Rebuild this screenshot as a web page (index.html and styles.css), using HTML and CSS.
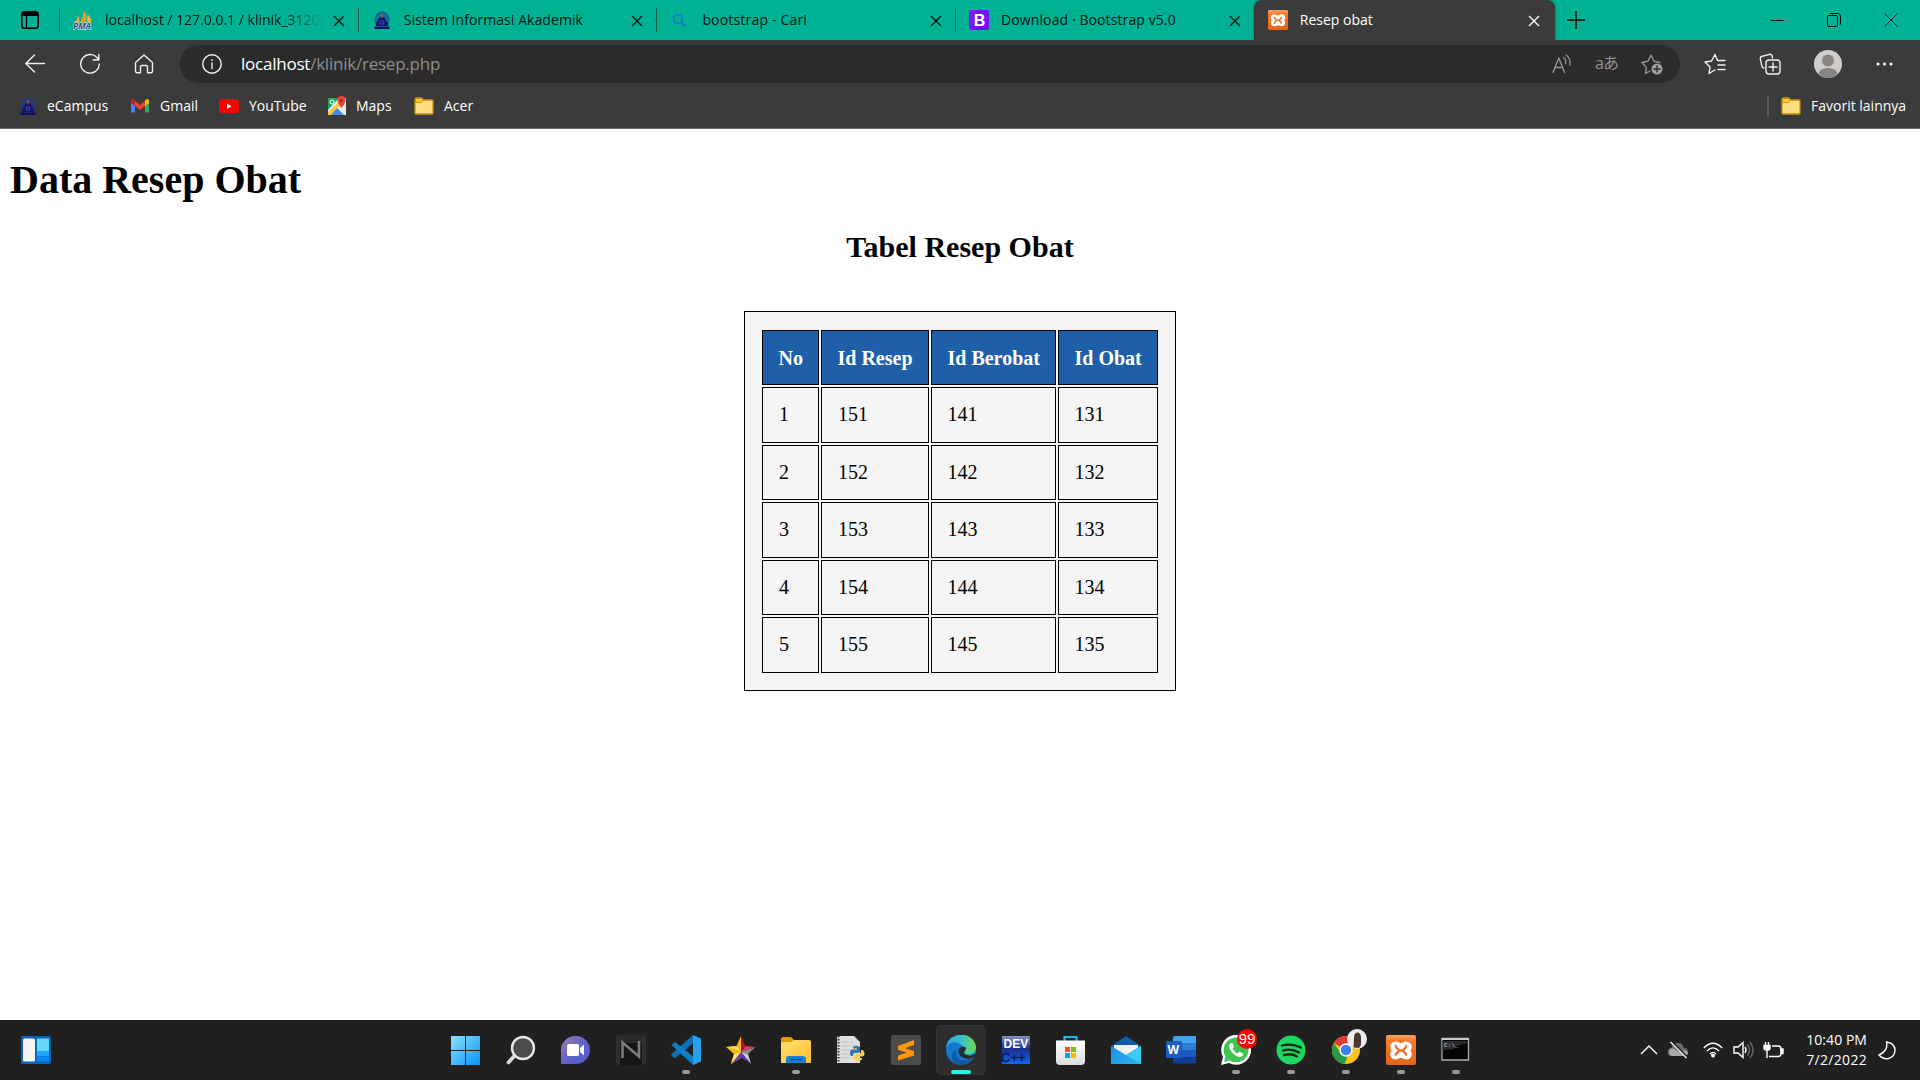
FILE: index.html
```html
<!DOCTYPE html>
<html lang="id">
<head>
<meta charset="utf-8">
<title>Resep obat</title>
<link rel="stylesheet" href="styles.css">
</head>
<body>
<svg class="defs" width="0" height="0">
  <defs>
    <linearGradient id="win" x1="0" y1="0" x2="1" y2="1"><stop offset="0" stop-color="#8be3ff"/><stop offset="1" stop-color="#0a93f8"/></linearGradient>
    <linearGradient id="chat" x1="0" y1="0" x2="1" y2="1"><stop offset="0" stop-color="#a77bb0"/><stop offset=".5" stop-color="#6063c8"/><stop offset="1" stop-color="#5059c9"/></linearGradient>
    <linearGradient id="folder" x1="0" y1="0" x2="1" y2="1"><stop offset="0" stop-color="#ffdf73"/><stop offset="1" stop-color="#ffc02a"/></linearGradient>
    <linearGradient id="edgeTop" x1="0" y1="0" x2="1" y2="0"><stop offset="0" stop-color="#2ba3de"/><stop offset=".5" stop-color="#35c1cf"/><stop offset="1" stop-color="#6fdc4e"/></linearGradient>
    <linearGradient id="dev" x1="0" y1="0" x2="0" y2="1"><stop offset="0" stop-color="#8290c8"/><stop offset=".45" stop-color="#1b2d8c"/><stop offset="1" stop-color="#0b6bf2"/></linearGradient>
    <linearGradient id="xam" x1="0" y1="0" x2="0" y2="1"><stop offset="0" stop-color="#f7a468"/><stop offset=".2" stop-color="#f6792a"/><stop offset="1" stop-color="#e2661a"/></linearGradient>
    <linearGradient id="boot" x1="0" y1="0" x2="1" y2="1"><stop offset="0" stop-color="#9013fe"/><stop offset="1" stop-color="#6610f2"/></linearGradient>
    <linearGradient id="store" x1="0" y1="0" x2="0" y2="1"><stop offset="0" stop-color="#fff"/><stop offset="1" stop-color="#dcdcdc"/></linearGradient>
    <linearGradient id="mail" x1="0" y1="0" x2="1" y2="1"><stop offset="0" stop-color="#1c8fe0"/><stop offset="1" stop-color="#28b4f2"/></linearGradient>
    <symbol id="x" viewBox="0 0 12 12"><path d="M1 1l10 10M11 1L1 11" fill="none" stroke="currentColor" stroke-width="1.4"/></symbol>
    <symbol id="campus" viewBox="0 0 20 20"><path d="M10 1.500c5 0 7.500 3.500 7.500 8 0 3-1 5-2 6.500h-11c-1-1.500-2-3.500-2-6.500 0-4.500 2.500-8 7.500-8z" fill="#1b3a94" opacity=".5"/><path d="M4 12q-1.500-8 6-9.500 7.500 1.500 6 9.500" fill="none" stroke="#2244a0" stroke-width="1" stroke-dasharray="1.500 1"/><path d="M10 6l3.500 2.500v2L16 12.500V16H4v-3.500l2.500-2v-2z" fill="#15156e"/><path d="M2.500 16.500h15V19h-15z" fill="#11116c"/><path d="M10 3l1 3-1 2.500L9 6z" fill="#df4b2b"/><circle cx="10" cy="12.500" r="1.800" fill="none" stroke="#4b63c4" stroke-width=".8"/></symbol>
    <symbol id="fold" viewBox="0 0 20 18"><path d="M1 3q0-2 1.500-2h5l2 2H18q1 0 1 1v12q0 1-1 1H2q-1 0-1-1z" fill="#ffde80" stroke="#c3920f" stroke-width="1.300"/><path d="M1.500 5.500V2.500q0-1 1-1h4.800l2 2-2 2z" fill="#ffc92e" stroke="#c3920f" stroke-width="1"/></symbol>
    <symbol id="xampp" viewBox="0 0 30 30"><rect width="30" height="30" rx="2" fill="url(#xam)"/><path d="M10 7.500c-3 0-4.800 2-4.800 4.200 0 1.700 1.200 2.200 1.200 3.800S5.200 17.500 5.200 19.200c0 2.300 1.800 4.200 4.800 4.200 2.600 0 3.200-1.600 5-1.600s2.400 1.600 5 1.600c3 0 4.800-1.900 4.800-4.200 0-1.700-1.200-2.200-1.200-3.700s1.200-2.100 1.200-3.800c0-2.200-1.800-4.200-4.800-4.200-2.600 0-3.200 2-5 2s-2.400-2-5-2z" fill="#fff" stroke="#fff" stroke-width="2"/><path d="M9.800 11.200c0 3 3 2 3 4.300s-3 1.500-3 4.300M20.200 11.200c0 3-3 2-3 4.300s3 1.500 3 4.300M12.800 15.500h4.400" fill="none" stroke="#ee7127" stroke-width="2.300" stroke-linecap="round"/></symbol>
  </defs>
</svg>

<header class="tabs">
  <div class="tab-menu"><svg width="18" height="18" viewBox="0 0 18 18"><rect x=".8" y=".8" width="16.400" height="16.400" rx="2.800" fill="none" stroke="#000" stroke-width="1.500"/><path d="M1 3.500Q1 1 3.500 1h11Q17 1 17 3.500V5H1z"/><path d="M5.500 5v12" stroke="#000" stroke-width="1.300"/></svg></div>
  <div class="tab">
    <svg class="fav" viewBox="0 0 20 20"><path d="M5.500 3Q6 9 1 12.500l5.500-.5z" fill="#f9b04a"/><path d="M11 .5q-.5 6-3.800 12l5.800-.5q1.500-6-2-11.500z" fill="#f89b1c"/><path d="M14.500 4q5 5 3.500 8.500h-4.200z" fill="#f4ad4b"/><text x="0" y="19" class="pma">PMA</text></svg>
    <span class="title fade t1">localhost / 127.0.0.1 / klinik_3120</span><svg class="close"><use href="#x"/></svg>
  </div>
  <div class="tab"><svg class="fav"><use href="#campus"/></svg><span class="title t2">Sistem Informasi Akademik</span><svg class="close"><use href="#x"/></svg></div>
  <div class="tab"><svg class="fav" viewBox="0 0 20 20"><circle cx="8" cy="9" r="4.300" fill="none" stroke="#1479c8" stroke-width="1.800"/><path d="M11 12l4 4.200" stroke="#1479c8" stroke-width="2.200"/></svg><span class="title t3">bootstrap - Cari</span><svg class="close"><use href="#x"/></svg></div>
  <div class="tab"><svg class="fav" viewBox="0 0 20 20"><rect width="20" height="20" rx="2" fill="url(#boot)"/><text x="4.800" y="15.800" class="boot-b">B</text></svg><span class="title t4">Download · Bootstrap v5.0</span><svg class="close"><use href="#x"/></svg></div>
  <div class="tab active"><svg class="fav"><use href="#xampp"/></svg><span class="title">Resep obat</span><svg class="close"><use href="#x"/></svg></div>
  <svg class="new-tab" viewBox="0 0 18 18"><path d="M9 0v18M0 9h18" stroke="#000" stroke-width="1.500"/></svg>
  <div class="window-controls">
    <svg width="14" height="14" viewBox="0 0 14 14"><path d="M.5 7.500h13" stroke="#000"/></svg>
    <svg width="14" height="14" viewBox="0 0 14 14"><rect x=".5" y="2.500" width="10" height="11" rx="1.500" fill="none" stroke="#000"/><path d="M3 .5h7.500q3 0 3 3V10q0 1.300-1 2" fill="none" stroke="#000"/></svg>
    <svg width="14" height="14" viewBox="0 0 14 14"><path d="M.5.500l13 13M13.500.500l-13 13" stroke="#123"/></svg>
  </div>
</header>

<nav class="toolbar">
  <div class="nav-icons">
    <svg width="22" height="22" viewBox="0 0 22 22"><path d="M20.500 10.500H2M10.500 2L1.800 10.500l8.700 8.500"/></svg>
    <svg width="22" height="22" viewBox="0 0 22 22"><path d="M19.500 7A9.300 9.300 0 1 0 20.300 11M19.800 1.500V7h-5.600"/></svg>
    <svg width="20" height="20" viewBox="0 0 20 20"><path d="M1.500 8.500L10 1l8.500 7.500V17q0 1.800-1.800 1.800h-3.200v-6q0-1.300-1.300-1.300H7.800q-1.300 0-1.300 1.300v6H3.300q-1.800 0-1.800-1.800z"/></svg>
  </div>
  <div class="address">
    <svg width="20" height="20" viewBox="0 0 20 20"><circle cx="10" cy="10" r="9.200"/><path d="M10 9v5.500M10 5.600v.8"/></svg>
    <span class="url"><b>localhost</b>/klinik/resep.php</span>
    <div class="address-icons">
      <svg width="20" height="20" viewBox="0 0 20 20"><path d="M1 18.500L6.800 4l5.800 14.500M3 13.500h7.600M11.500 3.500q3 2.500 2.200 6M14.200 1q5 4 3.600 10"/></svg>
      <span class="translate">aあ</span>
      <svg width="22" height="22" viewBox="0 0 22 22"><path d="M9 18l-4.500 2.500.8-6.100L1 9.500l6-1.200L10 2l3 6.300 6 1.200"/><circle cx="16" cy="16" r="5.500" class="solid"/><path d="M16 13v6M13 16h6" class="plus"/></svg>
    </div>
  </div>
  <div class="actions">
    <svg width="22" height="22" viewBox="0 0 22 22"><path d="M11 17l-6 3.500L6 14 1 9l6.500-1L11 1.500 13.500 7.500H21M14 12h7M14 16.500h7"/></svg>
    <svg width="22" height="22" viewBox="0 0 22 22"><path d="M5 15q-1.500 0-2-1.700L1.300 5.800Q1 4 2.500 3.500L10.500 1.300q2-.3 2.500 1.500L13.500 5"/><rect x="7" y="7" width="14" height="14" rx="3"/><path d="M14 10v8M10 14h8"/></svg>
    <svg width="28" height="28" viewBox="0 0 28 28" class="avatar"><circle cx="14" cy="14" r="14" fill="#d0cecb"/><circle cx="14" cy="10.500" r="6" fill="#898582"/><path d="M4.500 24q1-6 9.500-6t9.500 6q-4 4-9.500 4t-9.500-4z" fill="#898582"/></svg>
    <svg width="18" height="18" viewBox="0 0 18 18" class="dots"><circle cx="3" cy="9" r="1.500"/><circle cx="9.500" cy="9" r="1.500"/><circle cx="16" cy="9" r="1.500"/></svg>
  </div>
</nav>

<div class="bookmarks">
  <a class="bm b1"><svg><use href="#campus"/></svg><span>eCampus</span></a>
  <a class="bm b2"><svg viewBox="0 0 20 20"><path d="M1 4v12.500h4V8z" fill="#4285f4"/><path d="M19 4v12.500h-4V8z" fill="#34a853"/><path d="M5 5l5 4 5-4v5l-5 4-5-4z" fill="#ea4335"/><path d="M1 5q0-2.500 2.500-1.800L5 4.500V10L1 7z" fill="#c5221f"/><path d="M19 5q0-2.500-2.500-1.800L15 4.500V10l4-3z" fill="#fbbc04"/></svg><span>Gmail</span></a>
  <a class="bm b3"><svg viewBox="0 0 20 20"><rect x="0" y="3" width="20" height="14" rx="3.500" fill="#f00"/><path d="M8 7.500l4.500 2.700L8 13z" fill="#fff"/></svg><span>YouTube</span></a>
  <a class="bm b4"><svg viewBox="0 0 20 20"><path d="M1 2h18v17H1z" fill="#e8eaec"/><path d="M1 2h11L1 14z" fill="#23a55b"/><path d="M1 16L15 3v4L4 19H1z" fill="#fbc52b"/><path d="M4 19l6-7 7 7z" fill="#4387f4"/><circle cx="5" cy="6" r="2" fill="none" stroke="#fff"/><path d="M14.500 12q-4-5-4-8a4 4 0 0 1 8 0q0 3-4 8z" fill="#e8443a"/><circle cx="14.500" cy="4.500" r="1.300" fill="#8d2018"/></svg><span>Maps</span></a>
  <a class="bm b5"><svg><use href="#fold"/></svg><span>Acer</span></a>
  <a class="bm other"><svg><use href="#fold"/></svg><span>Favorit lainnya</span></a>
</div>

<main class="page">
  <h1>Data Resep Obat</h1>
  <h2>Tabel Resep Obat</h2>
  <table>
    <tr><th class="c1">No</th><th class="c2">Id Resep</th><th class="c3">Id Berobat</th><th class="c4">Id Obat</th></tr>
    <tr><td>1</td><td>151</td><td>141</td><td>131</td></tr>
    <tr><td>2</td><td>152</td><td>142</td><td>132</td></tr>
    <tr><td>3</td><td>153</td><td>143</td><td>133</td></tr>
    <tr><td>4</td><td>154</td><td>144</td><td>134</td></tr>
    <tr><td>5</td><td>155</td><td>145</td><td>135</td></tr>
  </table>
</main>

<footer class="taskbar">
  <svg class="widgets" width="30" height="28" viewBox="0 0 30 28"><rect width="30" height="28" rx="1.500" fill="#0a65b8"/><rect x="2" y="2.500" width="12" height="23" rx="1.500" fill="#f5f5f5"/><rect x="16" y="2.500" width="12" height="12.500" fill="#66d9ff"/><rect x="16" y="15" width="12" height="5" fill="#1ea7fd"/><rect x="16" y="20.500" width="12" height="5" fill="#0588ee"/></svg>
  <div class="apps">
    <div class="app"><svg viewBox="0 0 30 30"><path d="M0 1h14v14H0zM15 1h14v14H15zM0 16h14v14H0zM15 16h14v14H15z" fill="url(#win)"/></svg></div>
    <div class="app"><svg viewBox="0 0 30 30"><path d="M10 19l-7.500 8.500" stroke="#d8dadc" stroke-width="3.600" stroke-linecap="round"/><circle cx="17" cy="13" r="11" fill="#4a4b4d" stroke="#e4e8ea" stroke-width="2.400"/></svg></div>
    <div class="app"><svg viewBox="0 0 30 30"><path d="M0 29V15A14.500 14 0 1 1 14.500 29z" fill="url(#chat)"/><rect x="6" y="9" width="12" height="12" rx="1.500" fill="#fff"/><path d="M19 13l4-3.500v11L19 17z" fill="#fff"/></svg></div>
    <div class="app"><svg viewBox="0 0 30 30"><rect width="30" height="30" rx="4" fill="#2f2f2f"/><path d="M4 0h22v30H4z" fill="#161616"/><path d="M4 0h22v8H4z" fill="#2a2a2a"/><path d="M6.500 23V7.500l16.500 14V6" fill="none" stroke="#7b7b7b" stroke-width="2.600"/></svg></div>
    <div class="app run"><svg viewBox="0 0 30 30"><path d="M22 0v8.500L4 23l-3.500-2v-2z" fill="#0a71b9"/><path d="M.5 10L4 7l18 14.500V30z" fill="#0a80cc"/><path d="M22 0l8 3.500v23L22 30z" fill="#27a1ee"/></svg></div>
    <div class="app"><svg viewBox="0 0 30 30"><path d="M15 1l-4.500 10L0 12l8 7-3 10 10-6z" fill="#f6b514"/><path d="M15 1l4.500 10L15 16z" fill="#a91235"/><path d="M19.500 11L29.500 12 15 17z" fill="#dc3b62"/><path d="M29.500 12L22 19l-7-2z" fill="#8c8c8c"/><path d="M22 19l3 10-10-12z" fill="#ccc"/><path d="M15 17l8 10-8-4.500L5 29z" fill="#673ab7"/><path d="M15 16L0 12l10.500-1z" fill="#ffdd51"/><path d="M15 17L5 29l3-10z" fill="#ffe172"/></svg></div>
    <div class="app run"><svg viewBox="0 0 30 30"><path d="M0 4q0-2 2-2h8l3 3v5H0z" fill="#df9d05"/><path d="M0 7q0 0 2 0h8l3-2h15q2 0 2 2v21H0z" fill="url(#folder)"/><path d="M5 28v-4q0-3 3-3h14q3 0 3 3v4z" fill="#1680d3"/><path d="M9 24.500h12" stroke="#0754a3" stroke-width="1.200"/></svg></div>
    <div class="app"><svg viewBox="0 0 30 30"><path d="M1 1h17l6 6v21H1z" fill="#dedede"/><path d="M5 7h12M5 11h12M5 15h10M5 19h9M5 23h9" stroke="#c4c4c4"/><path d="M2.500 1v27" stroke="#333" stroke-width="2" stroke-dasharray="1.500 1.500"/><path d="M17 21h-1.500q-2-1-1.500-4 0-2.500 2.500-2.500H21V13.500h-4V12q3-2.500 7 0v4q0 2-2.500 2H18.500q-1.500 0-1.500 3z" fill="#3972a4"/><path d="M25 15h1.500q2 1 2 3.500 0 3-2.500 3h-4V23h4v1.500q-3 2.500-7 .5-1-.5-1-2v-2q0-2 2.500-2H23q2 0 2-2z" fill="#ffd04a"/></svg></div>
    <div class="app"><svg viewBox="0 0 30 30"><rect width="30" height="30" rx="2" fill="#4b4b4b"/><path d="M7 11l16-6v5l-9 3.300 9 2.700v4.500L7 25.500v-5l9-3L7 15z" fill="#ff9800"/></svg></div>
    <div class="app current"><svg viewBox="0 0 30 30"><circle cx="15" cy="15" r="15" fill="#1379cd"/><path d="M0 13C1-4 28-5 30 12c0 6-5 9-12 7-2-1-.5-2 0-4 .5-6-12-13-18-2z" fill="url(#edgeTop)"/><path d="M10 14c-2 8 5 15 17 9-4 7-12 8-17 6S4 19 10 14z" fill="#105ba5"/><path d="M15 12q5-1.500 5 2c-2 3-3 4 .5 6 3.500 1.500 6.500.5 8.500-1q1 1-1 3c-3 2-6 2.500-8.500 1.500-5-1-7.500-5-7-8q.5-2.500 2.500-3.500z" fill="#252a2c"/></svg></div>
    <div class="app"><svg viewBox="0 0 30 30"><rect x="1" y="1" width="28" height="28" fill="url(#dev)"/><text x="2.500" y="12.500" class="dev">DEV</text><text x="0" y="27" class="cpp">C++</text></svg></div>
    <div class="app"><svg viewBox="0 0 30 30"><path d="M8.500 7V2h12v5" fill="none" stroke="#22b6f2" stroke-width="2.200"/><path d="M0 5.500h29V26q0 4-4 4H4q-4 0-4-4z" fill="url(#store)"/><path d="M9 12h5v5H9z" fill="#f25022"/><path d="M15 12h5v5h-5z" fill="#7fba00"/><path d="M9 18h5v5H9z" fill="#00a4ef"/><path d="M15 18h5v5h-5z" fill="#ffb900"/></svg></div>
    <div class="app"><svg viewBox="0 0 30 30"><path d="M0 11l15-10 15 10v5H0z" fill="#0e5ca5"/><path d="M3 10h24v6l-12 8L3 16z" fill="#f0f0f0"/><path d="M0 11l15 9 15-9v18H0z" fill="url(#mail)"/><path d="M15 20l15-9v18z" fill="#3bcbf7"/></svg></div>
    <div class="app"><svg viewBox="0 0 30 30"><path d="M7 3q0-2 2-2h21v7H7z" fill="#41a5ee"/><path d="M7 8h23v7H7z" fill="#2b7cd3"/><path d="M7 15h23v7H7z" fill="#185abd"/><path d="M7 22h23v5q0 1.500-1.500 1.500H7z" fill="#103f91"/><rect y="6" width="16" height="17" rx="1.500" fill="#1b5cbe"/><text x="1.500" y="18.500" class="word">W</text></svg></div>
    <div class="app run"><svg viewBox="0 0 30 30"><path d="M0 30l2-8A15 15 0 1 1 8 28z" fill="#fff"/><path d="M3 27l1.500-5.500A12.400 12.400 0 1 1 8.500 25.500z" fill="#3fc351"/><path d="M10 8q-3 2-1.500 5.500 3 6 9 8.500 4 .5 5-3l-4-2.500-2 2q-3-1.500-5-5l1.500-2L11.500 8z" fill="#fff"/></svg><span class="badge">99</span></div>
    <div class="app run"><svg viewBox="0 0 30 30"><circle cx="15" cy="15" r="14.500" fill="#1ed760"/><path d="M6 10.500q10-2.500 19 2M7 15.500q8-2.500 16 2M8 20q7-2 13 1.500" fill="none" stroke="#17231b" stroke-width="2.300" stroke-linecap="round"/></svg></div>
    <div class="app run"><svg viewBox="0 0 30 30"><circle cx="15" cy="15" r="14" fill="#fbc116"/><path d="M15 15L2.900 8A14 14 0 0 1 27.100 8z" fill="#e33b2e"/><path d="M2.900 8l7 10.500 7 2.500-3.500 8A14 14 0 0 1 2.900 8z" fill="#229b4a"/><circle cx="15" cy="15" r="6.700" fill="#fff"/><circle cx="15" cy="15" r="5.200" fill="#3d82ee"/></svg><svg class="profile" viewBox="0 0 20 20"><circle cx="10" cy="10" r="10" fill="#f0eeec"/><path d="M6.500 18.500L7 9q0-5.500 3.500-5.500T14 9v7l-2 3z" fill="#4c3a32"/></svg></div>
    <div class="app run"><svg><use href="#xampp"/></svg></div>
    <div class="app run"><svg viewBox="0 0 30 30"><path d="M1 3.500h26.500V25H1z" fill="#050505" stroke="#a8adb3" stroke-width="1.300"/><path d="M1.500 6h25v3q-10 0-14 5-5 1-11 1z" fill="#2c2c2c"/><path d="M.5 3h27.500v2H.5z" fill="#c8ccd0"/><text x="3" y="11.500" class="cmd">C:\_</text></svg></div>
  </div>
  <div class="tray">
    <svg class="chev" width="18" height="12" viewBox="0 0 18 12"><path d="M1 10l8-8 8 8"/></svg>
    <svg class="cloud" width="20" height="18" viewBox="0 0 20 18"><path d="M4 15a4 4 0 0 1-.5-8Q5 2 10 2q4.500 0 5.500 4.500Q20 7 20 11q0 4-4 4z" fill="#6d6d6d" stroke="none"/><path d="M4 15a4 4 0 0 1-.5-7.500Q7 7 9 10q3-2 5 0 5-1 6 2-.5 3-4 3z" fill="#a8a8a8" stroke="none"/><path d="M3.500 1l15 15" stroke="#202020" stroke-width="3"/><path d="M2.500 1l16 16" stroke="#eee"/></svg>
    <svg class="wifi" width="20" height="16" viewBox="0 0 20 16"><path d="M.8 6q9.200-9.500 18.400 0M4 9q6-6.200 12 0M7 12q3-3.200 6 0"/><circle cx="10" cy="13.500" r="2" fill="#fff" stroke="none"/></svg>
    <svg class="vol" width="21" height="18" viewBox="0 0 21 18"><path d="M1 6h4l5-4.500v15L5 12H1z"/><path d="M12 6q2 3 0 6"/><path d="M14.500 3.500q4 5.500 0 11M17 1q6 8 0 16" class="dim"/></svg>
    <svg class="bat" width="21" height="17" viewBox="0 0 21 17"><path d="M9 4h6q3 0 3 3v4.500q0 3-3 3H6"/><path d="M18 7h2v4.500h-2zM1 3.500h6V6q0 2-2 2H3q-2 0-2-2zM2.500 0v3M5.500 0v3" fill="#fff"/><path d="M4 8v8"/></svg>
    <div class="clock"><span>10:40 PM</span><span class="date">7/2/2022</span></div>
    <svg class="moon" width="18" height="19" viewBox="0 0 18 19"><path d="M8.500 1q2 8.500-7.500 13 4 4.500 9.500 3.500Q17 15.500 17 9q-.5-7-8.500-8z"/></svg>
  </div>
</footer>
</body>
</html>
```

FILE: styles.css
```css
* { box-sizing: border-box; }
body {
  margin: 0;
  width: 1920px;
  height: 1080px;
  overflow: hidden;
  display: flex;
  flex-direction: column;
  background: #fff;
  font-family: "Open Sans", "Noto Sans CJK JP", sans-serif;
  font-size: 14px;
}
svg { display: block; flex: none; }
.defs { position: absolute; }

/* Tab strip */
.tabs { height: 40px; flex: none; display: flex; background: #00b294; align-items: center; }
.tab-menu { width: 59px; padding-left: 21px; }
.tab {
  width: 298.7px; height: 40px; flex: none;
  display: flex; align-items: center;
  padding: 0 13px 0 14px;
  position: relative;
}
.tab::before { content: ""; position: absolute; left: 0; top: 8px; width: 1px; height: 24px; background: #00614f; }
.fav { width: 20px; height: 20px; margin-right: 12px; }
.title { flex: 1; white-space: nowrap; overflow: hidden; line-height: 22px; color: #001511; }
.fade { -webkit-mask-image: linear-gradient(90deg, #000 180px, transparent 217px); mask-image: linear-gradient(90deg, #000 180px, transparent 217px); }
.t2 { letter-spacing: .07px; }
.t3 { letter-spacing: .18px; }
.t4 { letter-spacing: .1px; }
.close { width: 12px; height: 12px; margin: 1px 0 0 13px; color: #001511; }
.active { background: #3b3b3b; width: 301px; border-radius: 8px 8px 0 0; padding: 0 15px 0 14px; box-shadow: 0 0 3px #0006; }
.active::before { display: none; }
.active .title, .active .close { color: #fff; }
.new-tab { width: 18px; height: 18px; margin-left: 12px; }
.window-controls { display: flex; gap: 43px; margin-left: auto; padding-right: 22px; }
.pma { font: italic bold 8.500px "Open Sans", sans-serif; fill: #2d3b7c; stroke: #fff; stroke-width: 1px; paint-order: stroke; }
.boot-b { font: bold 16px "Liberation Sans", sans-serif; fill: #fff; }

/* Navigation bar */
.toolbar { height: 48px; flex: none; display: flex; align-items: center; background: #3b3b3b; position: relative; }
.toolbar svg { fill: none; stroke: #f0f0f0; stroke-width: 1.400; stroke-linejoin: round; stroke-linecap: round; }
.nav-icons { width: 180px; padding-left: 24px; display: flex; align-items: center; gap: 33px; }
.address { width: 1500px; height: 38px; border-radius: 19px; background: #2b2b2b; display: flex; align-items: center; padding: 0 17px 0 22px; }
.url { margin-left: 19px; color: #8e8e8e; font-size: 17px; line-height: 24px; letter-spacing: -.23px; }
.url b { color: #fff; font-weight: 400; }
.address-icons { display: flex; align-items: center; margin-left: auto; gap: 23px; }
.address-icons svg { stroke: #929292; }
.translate { width: 23px; color: #929292; font-size: 16px; line-height: 20px; margin-top: -3px; letter-spacing: -1px; white-space: nowrap; }
.toolbar .solid { fill: #a0a0a0; stroke: none; }
.toolbar .plus { stroke: #2b2b2b; }
.actions { display: flex; align-items: center; width: 240px; padding-left: 24px; gap: 33px; }
.toolbar .avatar { stroke: none; }
.toolbar .dots { fill: #fff; stroke: none; }

/* Bookmarks */
.bookmarks { height: 41px; flex: none; background: #3b3b3b; border-bottom: 1px solid #6b6b6b; display: flex; align-items: center; padding: 0 0 5px 18px; color: #fff; }
.bm { display: flex; align-items: center; gap: 10px; white-space: nowrap; line-height: 20px; }
.bm svg { width: 20px; height: 20px; }
.b1 { width: 112px; gap: 9px; }
.b2 { width: 89px; }
.b3 { width: 108px; }
.b4 { width: 87px; gap: 9px; }
.other { margin-left: auto; width: 153px; padding-left: 14px; position: relative; }
.other::before { content: ""; position: absolute; left: 0; top: 0; width: 2px; height: 20px; background: #5b5b5b; }

/* Page content */
.page { height: 891px; flex: none; padding: 0 10px; font-family: "Liberation Serif", serif; color: #000; }
h1 { margin: 28px 0 0; font-size: 40px; line-height: 46px; }
h2 { margin: 26px 0 0; font-size: 30px; line-height: 36px; text-align: center; }
table {
  width: 432px; height: 380px; margin: 46px auto 0;
  border: 1px solid #000; background: #f5f5f5;
  border-collapse: separate; border-spacing: 2px;
  padding: 16px 15px 15px;
  font-size: 20px; line-height: 23px; table-layout: fixed;
}
th, td { border: 1px solid #000; padding: 0 15px 0 16px; height: 55px; text-align: left; }
td:nth-child(n+3) { padding-left: 15.5px; }
th { background: #1f5faa; color: #fff; padding: 1px 15px 0 15.5px; white-space: nowrap; }
tr:nth-child(even) td { height: 56px; padding-bottom: 1px; }
.c1 { width: 57px; }
.c2 { width: 108px; }
.c3 { width: 125px; }
.c4 { width: 100px; }

/* Taskbar */
.taskbar { height: 60px; flex: none; background: #202020; display: flex; align-items: center; }
.widgets { margin-left: 21px; }
.apps { display: flex; gap: 5px; margin-left: 390px; }
.app { width: 50px; height: 50px; border-radius: 5px; position: relative; display: flex; align-items: center; justify-content: center; }
.app > svg { width: 30px; height: 30px; }
.run::after, .current::after { content: ""; position: absolute; bottom: 1px; left: 21px; width: 8px; height: 4px; border-radius: 2px; background: #9a9a9a; }
.current { background: #2d2d2d; border: 1px solid #353535; }
.current::after { bottom: 0; left: 14px; width: 20px; background: #1ffbe0; }
.badge { position: absolute; left: 26px; top: 4px; width: 20px; height: 20px; border-radius: 50%; background: #f00; color: #fff; font: 15px/20px "Liberation Sans", sans-serif; text-align: center; }
.app > .profile { position: absolute; left: 26px; top: 4px; width: 20px; height: 20px; }
.dev { font: bold 12px "Liberation Sans", sans-serif; fill: #fff; }
.cpp { font: 13px "Liberation Sans", sans-serif; fill: #071a55; stroke: #071a55; stroke-width: .5px; }
.word { font: bold 12px "Open Sans", sans-serif; fill: #fff; }
.cmd { font: 6px "Liberation Mono", monospace; fill: #ddd; }
.tray { margin-left: auto; display: flex; align-items: center; padding-right: 24px; }
.tray svg { fill: none; stroke: #fff; stroke-width: 1.400; }
.tray .dim { stroke: #6b6b6b; }
.cloud { margin-left: 10px; }
.wifi { margin-left: 15px; }
.vol { margin-left: 10px; }
.bat { margin-left: 9px; }
.clock { width: 83px; display: flex; flex-direction: column; align-items: flex-end; color: #fff; line-height: 20px; letter-spacing: .05px; }
.date { letter-spacing: .3px; }
.moon { margin-left: 11px; }
```
